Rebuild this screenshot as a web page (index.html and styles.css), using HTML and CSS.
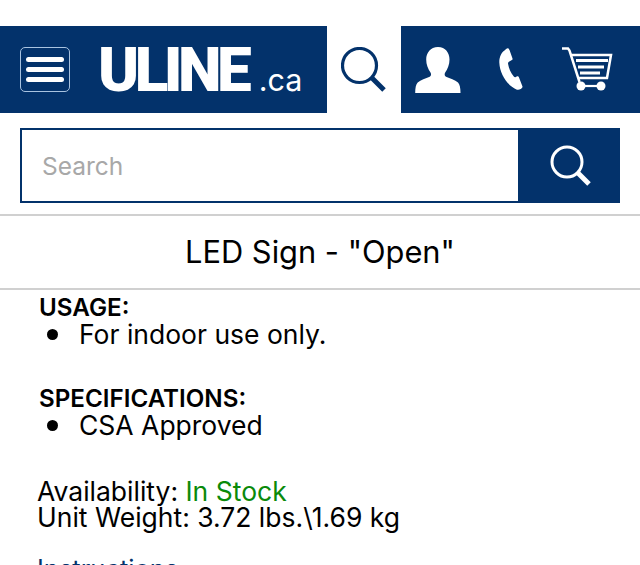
FILE: index.html
```html
<!DOCTYPE html>
<html lang="en">
<head>
<meta charset="utf-8">
<title>LED Sign - "Open"</title>
<link rel="stylesheet" href="styles.css">
</head>
<body>
<header class="nav">
  <div class="nav-brand">
    <button class="menu-btn" aria-label="Menu"><span></span><span></span><span></span></button>
    <div class="logo"><span class="logo-main">ULINE</span><span class="logo-ca">.ca</span></div>
  </div>
  <div class="nav-search">
    <svg class="icon-search" width="46" height="46" viewBox="0 0 46 46"><circle cx="18.5" cy="18.5" r="17" fill="none" stroke="#03326b" stroke-width="3.2"/><path d="M30.5 30.5 L43 43" stroke="#03326b" stroke-width="5" fill="none"/></svg>
  </div>
  <div class="nav-icons">
    <svg width="46" height="46" viewBox="0 0 46 46"><path fill="#fff" d="M23 0c7.500 0 11.500 6 11.500 12.500 0 5-1.800 9.500-4.300 13-1 1.500-.6 3.500.8 4.200 4 1.800 9 3 12 5.800 1.800 1.700 2.500 5.500 2.500 10.500H.2c0-5 .7-8.800 2.500-10.500 3-2.800 8-4 12-5.800 1.400-.7 1.800-2.700.8-4.200-2.500-3.500-4.300-8-4.300-13C11.200 6 15.500 0 23 0z"/></svg>
    <svg width="24" height="44" viewBox="0 0 24 44"><path fill="#fff" d="M9.500.5 10.500 2 13.500 10.500c.2.700 0 1.300-.6 1.600l-3 1.600c-.8.500-1 1.300-.8 2.200.8 4.400 2.500 8.500 5.700 12.500.5.700 1.200 1 2 .6l1.300-.7c.6-.3 1.200-.2 1.600.4l3.700 9.500c.3.800 0 1.500-.7 2l-1 .8c-1.300.8-3 1.200-4.300.4C8 37 .8 26 .3 14.500.1 9 2.500 4.500 5.500 2.500 6.800 1.500 8-.2 9.500.5z"/></svg>
    <svg width="52" height="45" viewBox="0 0 52 45"><g fill="none" stroke="#fff"><path d="M1 1.500h6l1.500 2 10 31.500" stroke-width="2.500"/><path d="M9.500 8H50l-4 23H17" stroke-width="2.500"/><path d="M15 13.500h32M17 20h26M19 26h20" stroke-width="3"/><path d="M20 39h20" stroke-width="2.200"/></g><circle cx="20" cy="39" r="4.500" fill="#fff"/><circle cx="40" cy="39" r="4.500" fill="#fff"/></svg>
  </div>
</header>

<form class="search">
  <input class="search-input" type="text" placeholder="Search">
  <button class="search-btn" type="button" aria-label="Search">
    <svg width="42" height="42" viewBox="0 0 42 42"><circle cx="17" cy="17" r="15" fill="none" stroke="#fff" stroke-width="3"/><path d="M27.500 27.500 L39 39" stroke="#fff" stroke-width="5" fill="none"/></svg>
  </button>
</form>

<h1 class="title">LED Sign - "Open"</h1>

<main class="content">
  <section class="block">
    <h2 class="block-head">USAGE:</h2>
    <ul class="bullets"><li>For indoor use only.</li></ul>
  </section>
  <section class="block">
    <h2 class="block-head">SPECIFICATIONS:</h2>
    <ul class="bullets"><li>CSA Approved</li></ul>
  </section>
  <div class="facts">
    <div>Availability: <span class="stock">In Stock</span></div>
    <div>Unit Weight: 3.72 lbs.\1.69 kg</div>
  </div>
  <a class="link" href="#">Instructions</a>
</main>
</body>
</html>
```

FILE: styles.css
```css
html, body {
  margin: 0;
  padding: 0;
  background: #fff;
  overflow: hidden;
  height: 565px;
}
body {
  font-family: "Inter", "Liberation Sans", sans-serif;
  color: #000;
  padding-top: 26px;
  box-sizing: border-box;
}
.nav {
  display: flex;
  height: 87px;
}
.nav-brand {
  width: 327px;
  background: #03326b;
  display: flex;
  align-items: center;
  padding-left: 20px;
  box-sizing: border-box;
}
.menu-btn {
  width: 50px;
  height: 45px;
  box-sizing: border-box;
  border: 1.5px solid #a9c3e0;
  border-radius: 5px;
  background: transparent;
  padding: 0;
  display: flex;
  flex-direction: column;
  justify-content: center;
  align-items: center;
  gap: 5px;
}
.menu-btn span {
  width: 38px;
  height: 5px;
  border-radius: 3px;
  background: #fff;
}
.logo {
  margin-left: 28px;
  display: flex;
  align-items: baseline;
  color: #fff;
}
.logo-main {
  font-family: "Roboto", sans-serif;
  font-size: 62px;
  line-height: 62px;
  font-weight: 900;
  letter-spacing: -4.5px;
}
.logo-ca {
  font-size: 30.5px;
  margin-left: 11.5px;
  font-weight: 400;
}
.nav-search {
  width: 74px;
  background: #fff;
  display: flex;
  align-items: center;
  justify-content: center;
}
.nav-icons {
  flex: 1;
  background: #03326b;
  display: flex;
  align-items: center;
  padding-left: 14px;
  gap: 38px;
}
.search {
  display: flex;
  height: 75px;
  margin: 15px 20px 0;
}
.search-input {
  flex: 1;
  min-width: 0;
  box-sizing: border-box;
  border: 2px solid #03326b;
  border-right: 0;
  padding: 0 20px;
  font: 24.5px "Inter", sans-serif;
  outline: none;
}
.search-input::placeholder {
  color: #a8a8a8;
  opacity: 1;
}
.search-btn {
  width: 102px;
  background: #03326b;
  border: 0;
  padding: 0 0 0 3px;
  display: flex;
  align-items: center;
  justify-content: center;
}
.title {
  margin: 11px 0 0;
  height: 72px;
  border-top: 2px solid #d0d0d0;
  border-bottom: 2px solid #d0d0d0;
  font-size: 30.8px;
  line-height: 72px;
  font-weight: 400;
  text-align: center;
}
.content {
  padding-left: 37px;
  font-size: 26.5px;
}
.block {
  margin-left: 2px;
  margin-bottom: 33px;
}
.block-head {
  margin: 0;
  font-size: 24.2px;
  line-height: 28px;
  font-weight: 600;
  padding-top: 4px;
}
.bullets {
  margin: -2px 0 0;
  padding: 0;
  line-height: 28px;
  list-style: none;
}
.bullets li {
  display: flex;
  align-items: center;
}
.bullets li::before {
  content: "";
  width: 11px;
  height: 11px;
  border-radius: 50%;
  background: #000;
  margin: 0 21px 0 8px;
}
.facts {
  margin-top: 39px;
  line-height: 26px;
}
.block + .facts {
  margin-top: 39px;
}
.stock {
  color: #0a8a0a;
}
.link {
  display: block;
  margin-top: 23px;
  font-size: 25.5px;
  color: #03326b;
  text-decoration: none;
}
```
